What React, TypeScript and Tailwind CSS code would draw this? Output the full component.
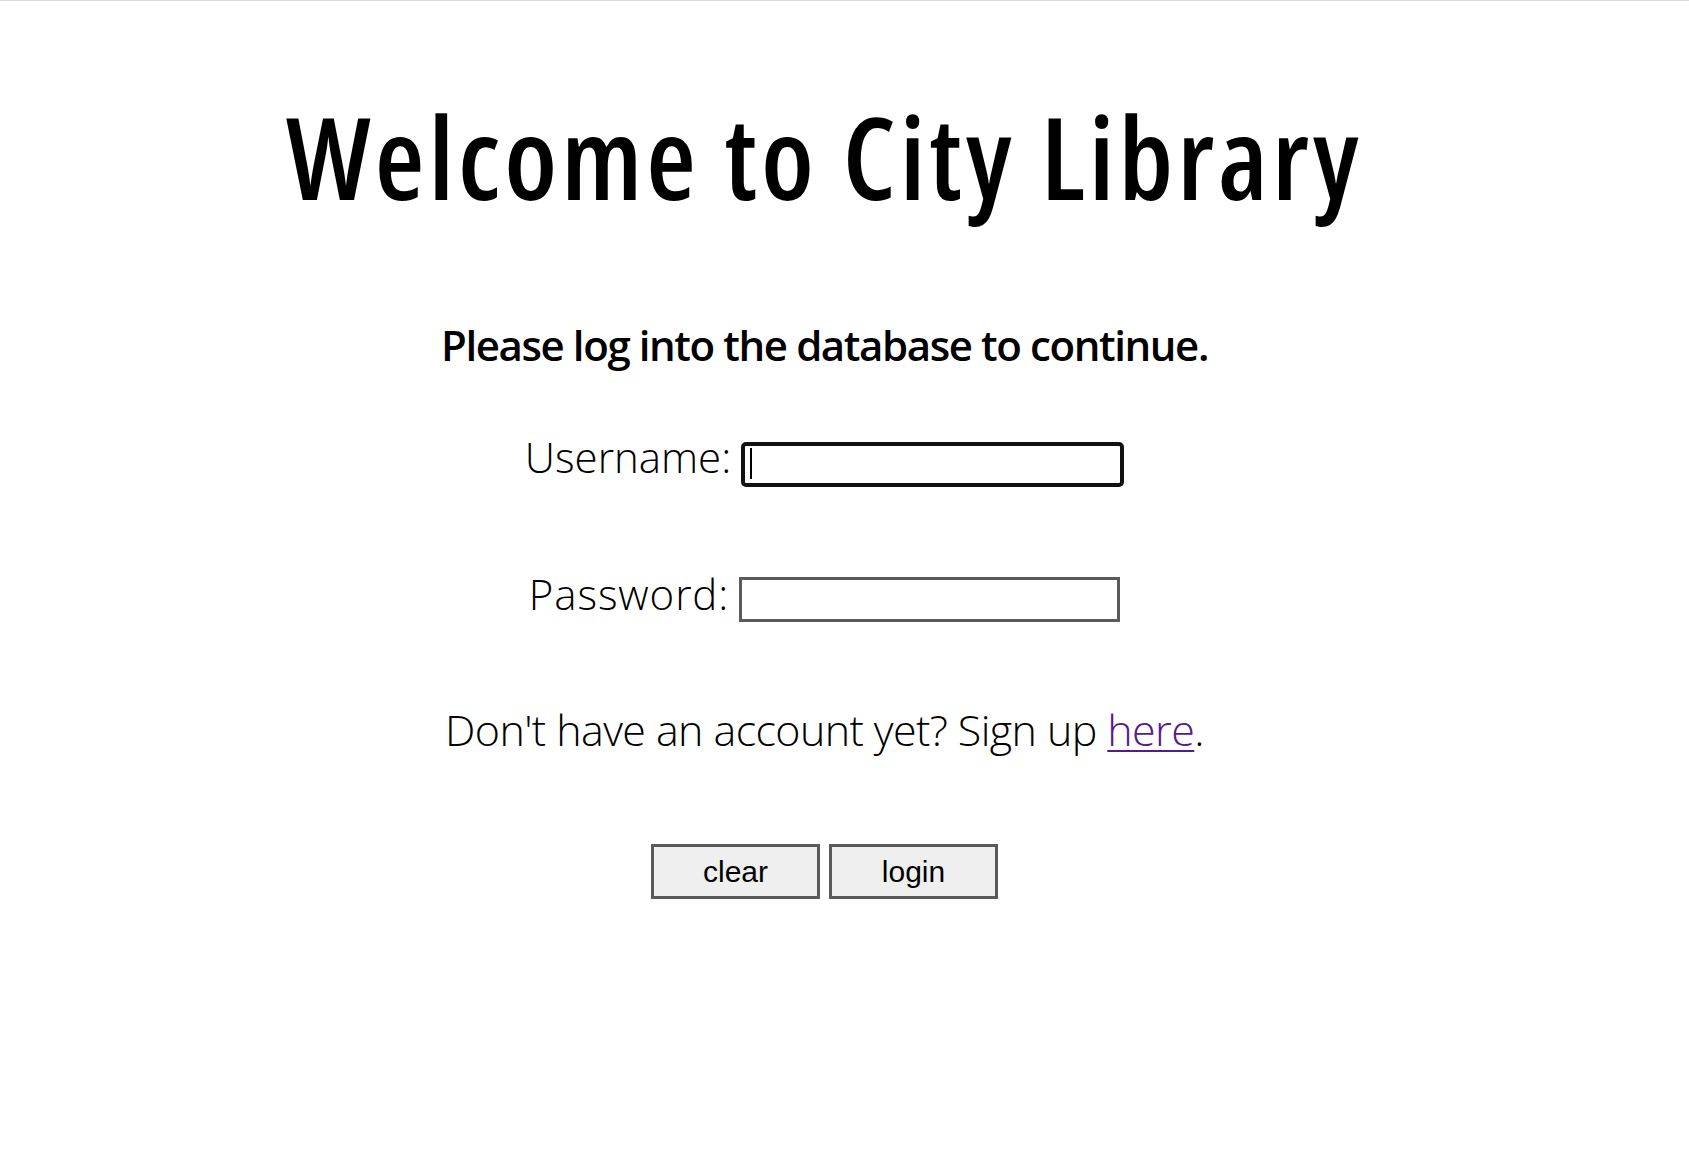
import React from 'react';

export default function App() {
  return (
    <div className="min-h-screen bg-white border-t border-[#dcdcdc] text-black font-['Open_Sans',sans-serif]">
      <div className="pr-10 flex flex-col items-center">
        <h1 className="mt-[98px] text-[114px] leading-[114px] font-semibold font-stretch-[75%] tracking-[4px]">Welcome to City Library</h1>

        <h3 className="mt-[111px] text-[42px] leading-[42px] font-semibold tracking-[-1.4px]">
          Please log into the database to continue.
        </h3>

        <div className="mt-[70px] flex items-start gap-[10px]">
          <label className="text-[42px] leading-[42px] font-light">Username:</label>
          <div className="relative mt-[6px]">
            <input type="text" className="block w-[383px] h-[45px] border-4 border-[#111] rounded-[5px] outline-none bg-white" />
            <span className="absolute left-[9px] top-[6px] w-[2px] h-[31px] bg-black" />
          </div>
        </div>

        <div className="mt-[86px] flex items-start gap-[10px]">
          <label className="text-[42px] leading-[42px] font-light tracking-[0.9px]">Password:</label>
          <input type="password" className="mt-[4px] block w-[381px] h-[45px] border-[3px] border-[#5a5a5a] outline-none bg-white" />
        </div>

        <p className="mt-[86px] text-[43px] leading-[43px] font-light tracking-[-0.6px]">
          Don't have an account yet? Sign up{' '}
          <a href="#" className="text-[#551a8b] underline decoration-2 underline-offset-4">here</a>.
        </p>

        <div className="mt-[93px] flex gap-[9px] font-['Liberation_Sans',Arial,sans-serif]">
          <button className="w-[169px] h-[55px] border-[3px] border-[#5a5a5a] bg-[#efefef] text-[30px] text-black">clear</button>
          <button className="w-[169px] h-[55px] border-[3px] border-[#5a5a5a] bg-[#efefef] text-[30px] text-black">login</button>
        </div>
      </div>
    </div>
  );
}
